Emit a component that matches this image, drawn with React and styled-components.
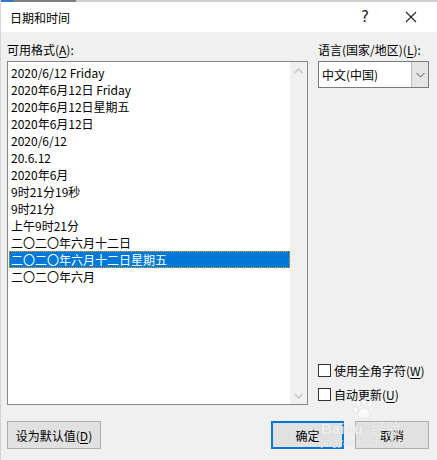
import React, { useState } from 'react';
import styled, { createGlobalStyle } from 'styled-components';

const formats = [
  '2020/6/12 Friday',
  '2020年6月12日 Friday',
  '2020年6月12日星期五',
  '2020年6月12日',
  '2020/6/12',
  '20.6.12',
  '2020年6月',
  '9时21分19秒',
  '9时21分',
  '上午9时21分',
  '二〇二〇年六月十二日',
  '二〇二〇年六月十二日星期五',
  '二〇二〇年六月',
];

const App = () => {
  const [selected, setSelected] = useState(11);
  const [fullWidth, setFullWidth] = useState(false);
  const [autoUpdate, setAutoUpdate] = useState(false);

  return (
    <>
      <GlobalStyle />
      <Window>
        <TopStrip />
        <TitleBar>
          <Title>日期和时间</Title>
          <TitleButtons>
            <HelpButton>?</HelpButton>
            <CloseButton>
              <svg width="12" height="12" viewBox="0 0 12 12">
                <path d="M1 1 L11 11 M11 1 L1 11" stroke="#222" strokeWidth="1.1" fill="none" />
              </svg>
            </CloseButton>
          </TitleButtons>
        </TitleBar>
        <Body>
          <Columns>
            <LeftColumn>
              <Label>
                可用格式(<u>A</u>):
              </Label>
              <ListBox>
                <Items>
                  {formats.map((f, i) => (
                    <Item key={f} active={i === selected} onClick={() => setSelected(i)}>
                      {f}
                    </Item>
                  ))}
                </Items>
                <ScrollBar>
                  <Arrow>
                    <svg width="9" height="6" viewBox="0 0 9 6">
                      <path d="M0.5 5 L4.5 1 L8.5 5" stroke="#c2c2c2" strokeWidth="1.4" fill="none" />
                    </svg>
                  </Arrow>
                  <Arrow>
                    <svg width="9" height="6" viewBox="0 0 9 6">
                      <path d="M0.5 1 L4.5 5 L8.5 1" stroke="#c2c2c2" strokeWidth="1.4" fill="none" />
                    </svg>
                  </Arrow>
                </ScrollBar>
              </ListBox>
            </LeftColumn>
            <RightColumn>
              <Label>
                语言(国家/地区)(<u>L</u>):
              </Label>
              <Combo>
                <ComboText>中文(中国)</ComboText>
                <ComboButton>
                  <svg width="9" height="6" viewBox="0 0 9 6">
                    <path d="M0.5 1 L4.5 5 L8.5 1" stroke="#555" strokeWidth="1" fill="none" />
                  </svg>
                </ComboButton>
              </Combo>
              <Options>
                <CheckRow onClick={() => setFullWidth(!fullWidth)}>
                  <Box>{fullWidth && '✓'}</Box>
                  <span>
                    使用全角字符(<u>W</u>)
                  </span>
                </CheckRow>
                <CheckRow onClick={() => setAutoUpdate(!autoUpdate)}>
                  <Box>{autoUpdate && '✓'}</Box>
                  <span>
                    自动更新(<u>U</u>)
                  </span>
                </CheckRow>
              </Options>
            </RightColumn>
          </Columns>
          <Footer>
            <Button width="94px">
              设为默认值(<u>D</u>)
            </Button>
            <RightButtons>
              <Button width="73px" primary>
                确定
              </Button>
              <Button width="74px">取消</Button>
            </RightButtons>
          </Footer>
        </Body>
        <Watermark>
          <PawIcon width="22" height="22" viewBox="0 0 22 22">
            <ellipse cx="5" cy="6" rx="2.4" ry="3.2" />
            <ellipse cx="11" cy="3.6" rx="2.4" ry="3.2" />
            <ellipse cx="17" cy="6" rx="2.4" ry="3.2" />
            <ellipse cx="2.8" cy="12" rx="2.2" ry="2.8" />
            <path d="M11 10 C7 10 4.5 15 5.5 18 C6.5 21 9 20 11 19.5 C13 20 15.5 21 16.5 18 C17.5 15 15 10 11 10 Z" />
          </PawIcon>
          <Brand>
            Baidu<Jing>经验</Jing>
          </Brand>
          <Site>jingyan.baidu.com</Site>
        </Watermark>
      </Window>
    </>
  );
};

export default App;

const GlobalStyle = createGlobalStyle`
  html, body {
    margin: 0;
    padding: 0;
    background: #f0f0f0;
  }
  body {
    font-family: "Noto Sans CJK SC", "Noto Sans", sans-serif;
    font-size: 12px;
    color: #000;
  }
  u {
    text-underline-offset: 2px;
  }
`;

const Window = styled.div`
  position: relative;
  width: 437px;
  height: 460px;
  display: flex;
  flex-direction: column;
  background: #f0f0f0;
  border-left: 1px solid #d4d4d4;
  box-sizing: border-box;
  overflow: hidden;
`;

const TopStrip = styled.div`
  height: 2px;
  background: linear-gradient(90deg, #2b79c9 0 12px, #7d7d7d 12px 75px, #cfcfcf 75px);
`;

const TitleBar = styled.div`
  height: 30px;
  background: #fff;
  display: flex;
  align-items: center;
  justify-content: space-between;
  padding-left: 9px;
`;

const Title = styled.div`
  font-size: 12px;
  line-height: 17px;
`;

const TitleButtons = styled.div`
  display: flex;
  align-items: center;
  height: 100%;
`;

const HelpButton = styled.div`
  width: 46px;
  text-align: center;
  font-family: "DejaVu Sans", sans-serif;
  font-size: 15px;
  color: #222;
`;

const CloseButton = styled.div`
  width: 46px;
  height: 100%;
  display: flex;
  align-items: center;
  justify-content: center;
  margin-right: 3px;
`;

const Body = styled.div`
  flex: 1;
  display: flex;
  flex-direction: column;
  padding: 9px 7px 11px 6px;
`;

const Columns = styled.div`
  display: grid;
  grid-template-columns: 301px 111px;
  column-gap: 10px;
  height: 364px;
`;

const LeftColumn = styled.div`
  display: flex;
  flex-direction: column;
`;

const RightColumn = styled.div`
  display: flex;
  flex-direction: column;
`;

const Label = styled.div`
  line-height: 17px;
  height: 17px;
  margin-bottom: 3px;
  white-space: nowrap;
`;

const ListBox = styled.div`
  flex: 1;
  display: flex;
  background: #fff;
  border: 1px solid #828790;
`;

const Items = styled.div`
  flex: 1;
  padding: 2px 0 0 1px;
`;

const Item = styled.div`
  height: 17px;
  line-height: 17px;
  padding-left: 2px;
  white-space: nowrap;
  cursor: default;
  box-sizing: border-box;
  background: ${props => (props.active ? '#0078d7' : 'transparent')};
  color: ${props => (props.active ? '#fff' : '#000')};
  outline: ${props => (props.active ? '1px dotted #e8a000' : 'none')};
  outline-offset: -1px;
`;

const ScrollBar = styled.div`
  width: 17px;
  background: #f0f0f0;
  display: flex;
  flex-direction: column;
  justify-content: space-between;
`;

const Arrow = styled.div`
  height: 17px;
  display: flex;
  align-items: center;
  justify-content: center;
`;

const Combo = styled.div`
  display: flex;
  height: 27px;
  background: #fff;
  border: 1px solid #7a7a7a;
  box-sizing: border-box;
`;

const ComboText = styled.div`
  flex: 1;
  padding-left: 3px;
  line-height: 25px;
`;

const ComboButton = styled.div`
  width: 16px;
  background: #e5e5e5;
  border-left: 1px solid #bdbdbd;
  display: flex;
  align-items: center;
  justify-content: center;
`;

const Options = styled.div`
  margin-top: auto;
  display: flex;
  flex-direction: column;
  gap: 7px;
  margin-bottom: 2px;
`;

const CheckRow = styled.div`
  display: flex;
  align-items: center;
  gap: 3px;
  height: 17px;
  white-space: nowrap;
  cursor: default;
`;

const Box = styled.div`
  width: 13px;
  height: 13px;
  box-sizing: border-box;
  border: 1px solid #333;
  background: #fff;
  font-size: 10px;
  line-height: 11px;
  text-align: center;
`;

const Footer = styled.div`
  margin-top: 16px;
  display: flex;
  justify-content: space-between;
  align-items: center;
`;

const RightButtons = styled.div`
  display: flex;
  gap: 11px;
  margin-right: 1px;
`;

const Button = styled.div`
  width: ${props => props.width};
  height: 28px;
  box-sizing: border-box;
  display: flex;
  align-items: center;
  justify-content: center;
  background: #e1e1e1;
  border: ${props => (props.primary ? '2px solid #0078d7' : '1px solid #adadad')};
  white-space: nowrap;
  cursor: default;
`;

const Watermark = styled.div`
  position: absolute;
  left: 320px;
  top: 398px;
  display: flex;
  flex-direction: column;
  pointer-events: none;
  color: rgba(255, 255, 255, 0.75);
  text-shadow: 0 0 1px rgba(110, 110, 110, 0.3);
  font-family: "Liberation Sans", sans-serif;
`;

const PawIcon = styled.svg`
  margin-left: 32px;
  fill: rgba(255, 255, 255, 0.7);
  stroke: rgba(150, 150, 150, 0.25);
  stroke-width: 0.6;
`;

const Brand = styled.div`
  font-size: 15px;
  font-weight: bold;
  line-height: 16px;
  white-space: nowrap;
`;

const Jing = styled.span`
  font-family: "Noto Sans CJK SC", sans-serif;
  font-size: 15px;
  margin-left: 8px;
  font-weight: normal;
`;

const Site = styled.div`
  font-size: 10px;
  line-height: 11px;
  letter-spacing: 0.3px;
`;
